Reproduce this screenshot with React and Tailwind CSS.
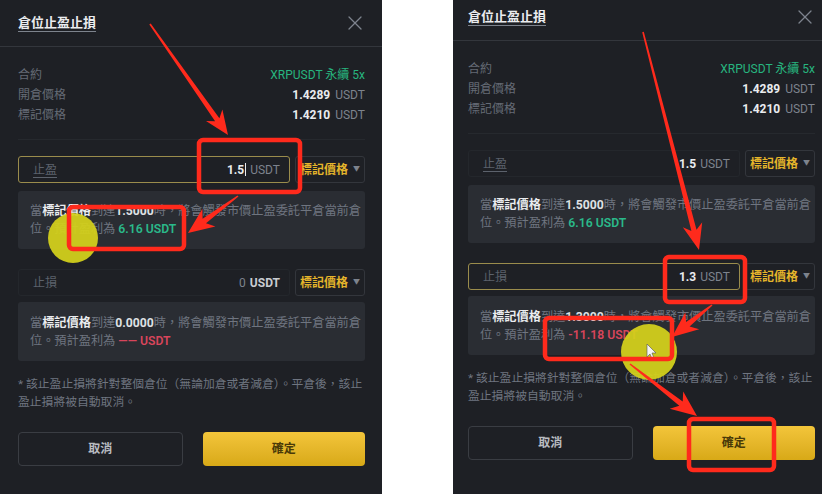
import { X } from "lucide-react";

const font = "font-['Roboto','Noto_Sans_CJK_TC',sans-serif]";

function arrowPoints(x1, y1, x2, y2, head = 22, headW = 10, shaft = 2.6, tail = 0.8) {
  const dx = x2 - x1;
  const dy = y2 - y1;
  const len = Math.hypot(dx, dy);
  const ux = dx / len;
  const uy = dy / len;
  const nx = -uy;
  const ny = ux;
  const bx = x2 - ux * head;
  const by = y2 - uy * head;
  const jx = x2 - ux * head * 0.78;
  const jy = y2 - uy * head * 0.78;
  const p = (x, y) => `${x.toFixed(1)},${y.toFixed(1)}`;
  return [
    p(x1 + nx * tail, y1 + ny * tail),
    p(jx + nx * shaft, jy + ny * shaft),
    p(bx + nx * headW, by + ny * headW),
    p(x2, y2),
    p(bx - nx * headW, by - ny * headW),
    p(jx - nx * shaft, jy - ny * shaft),
    p(x1 - nx * tail, y1 - ny * tail),
  ].join(" ");
}

function Row({ label, children }) {
  return (
    <div className="flex h-5 items-center justify-between text-[12px]">
      <span className="text-[#656b75]">{label}</span>
      <span>{children}</span>
    </div>
  );
}

function PriceInput({ label, value, focused, underline, caret, placeholder }) {
  return (
    <div className="flex h-[27px] gap-[5px]">
      <div
        className={`flex flex-1 items-center justify-between rounded-[3px] border pl-[14px] pr-[9px] ${
          focused ? "border-[#9a8c4c]" : "border-[#24272c]"
        }`}
      >
        <span
          className={`text-[12px] text-[#5c626c] ${
            underline ? "underline decoration-[#5c626c] underline-offset-[3px]" : ""
          }`}
        >
          {label}
        </span>
        <span className="flex items-center text-[12px]">
          {placeholder ? (
            <>
              <span className="text-[#7d838d]">{value}</span>
              <span className="ml-1 font-bold text-[#c9ccd1]">USDT</span>
            </>
          ) : (
            <>
              <span className="font-bold text-[#eaecef]">{value}</span>
              {caret && <span className="ml-px inline-block h-[13px] w-px bg-[#eaecef]" />}
              <span className="ml-1 text-[#7d838d]">USDT</span>
            </>
          )}
        </span>
      </div>
      <div className="flex w-[70px] items-center justify-center gap-[5px] rounded-[3px] border border-[#33363c]">
        <span className="text-[12px] font-bold text-[#e5b52b]">標記價格</span>
        <span className="text-[7px] text-[#7d838d]">▼</span>
      </div>
    </div>
  );
}

function InfoBox({ price, result, tone, className }) {
  const color = tone === "green" ? "text-[#2ab98a]" : "text-[#d8455b]";
  return (
    <div className={`rounded-[3px] bg-[#2a2d33] px-3 text-[12.2px] leading-[18px] text-[#6f7580] ${className}`}>
      <div className="whitespace-nowrap">
        當<span className="font-bold text-[#eaecef]">標記價格</span>到達
        <span className="font-bold text-[#dfe1e4]">{price}</span>時，將會觸發市價止盈委託平倉當前倉
      </div>
      <div className="whitespace-nowrap">
        位。預計盈利為 <span className={`font-semibold ${color}`}>{result}</span>
      </div>
    </div>
  );
}

function Panel({ side }) {
  const left = side === "left";
  const pad = left ? "pl-[18px] pr-[17px]" : "pl-[15px] pr-[7px]";
  return (
    <div className={`flex flex-col ${left ? "" : "-mt-[6px]"}`}>
      <div className={`flex h-[47px] items-center justify-between border-b border-[#33363c] ${pad}`}>
        <span className="text-[13px] font-bold text-[#eaecef] underline decoration-[#7d838d] underline-offset-[4px]">
          倉位止盈止損
        </span>
        <X size={24} strokeWidth={1.3} className="-mr-[2px] text-[#7d838d]" />
      </div>
      <div className={`flex flex-col ${pad}`}>
        <div className="border-b border-[#26292e] pt-[18px] pb-[14px]">
          <Row label="合約">
            <span className="text-[#27b57f]">XRPUSDT 永續 5x</span>
          </Row>
          <Row label="開倉價格">
            <span className="font-bold text-[#eaecef]">1.4289</span>
            <span className="ml-[5px] text-[#7d838d]">USDT</span>
          </Row>
          <Row label="標記價格">
            <span className="font-bold text-[#eaecef]">1.4210</span>
            <span className="ml-[5px] text-[#7d838d]">USDT</span>
          </Row>
        </div>
        <div className="mt-4">
          <PriceInput label="止盈" value="1.5" focused={left} caret={left} underline />
        </div>
        <InfoBox price="1.5000" result="6.16 USDT" tone="green" className="mt-2 py-[11px]" />
        <div className="mt-5">
          {left ? (
            <PriceInput label="止損" value="0" placeholder />
          ) : (
            <PriceInput label="止損" value="1.3" focused />
          )}
        </div>
        {left ? (
          <InfoBox price="0.0000" result="—— USDT" tone="red" className="mt-[6px] pt-[12px] pb-[11px]" />
        ) : (
          <InfoBox price="1.3000" result="-11.18 USDT" tone="red" className="mt-[6px] pt-[12px] pb-[11px]" />
        )}
        <div className="mt-[14px] text-[11.8px] leading-[18px] text-[#6f7580]">
          <div className="whitespace-nowrap">* 該止盈止損將針對整個倉位（無論加倉或者減倉）。平倉後，該止</div>
          <div className="whitespace-nowrap">盈止損將被自動取消。</div>
        </div>
        <div className="mt-[21px] flex h-[34px] gap-5">
          <button className="flex-1 rounded-[4px] border border-[#3a3d43] text-[12px] font-bold text-[#b9bcc1]">
            取消
          </button>
          <button className="flex-1 rounded-[4px] bg-gradient-to-b from-[#f3c53a] to-[#d8a916] text-[12px] font-bold text-[#4a3a08]">
            確定
          </button>
        </div>
      </div>
    </div>
  );
}

function Annotations() {
  const red = "#ff2a1c";
  const box = (x, y, w, h) => (
    <rect x={x + 2} y={y + 2} width={w - 4} height={h - 4} rx="4" fill="none" stroke={red} strokeWidth="4.5" />
  );
  return (
    <svg className="pointer-events-none absolute left-0 top-0" width="822" height="494" viewBox="0 0 822 494">
      <circle cx="73" cy="238" r="25" fill="#d3d01c" fillOpacity="0.94" />
      <circle cx="649" cy="352" r="28" fill="#d3d01c" fillOpacity="0.94" />
      <path d="M647 344 L647 357 L650 354 L652 359 L654 358 L652 353 L656 353 Z" fill="#f4f4f4" stroke="#555" strokeWidth="0.6" />

      <polygon points={arrowPoints(150, 24, 228, 135, 24, 10, 2.6)} fill={red} />
      <polygon points={arrowPoints(238, 196, 188, 233, 26, 11, 2.8)} fill={red} />
      {box(197, 138, 105, 56)}
      {box(67, 205, 119, 46)}

      <polygon points={arrowPoints(643, 32, 699, 250, 26, 10, 2.6)} fill={red} />
      <polygon points={arrowPoints(712, 305, 672, 337, 26, 11, 2.8)} fill={red} />
      <polygon points={arrowPoints(630, 364, 697, 416, 26, 11, 2.8)} fill={red} />
      {box(663, 255, 84, 49)}
      {box(543, 316, 131, 45)}
      {box(687, 417, 89, 55)}
    </svg>
  );
}

export default function App() {
  return (
    <div className={`relative flex h-[494px] w-[822px] overflow-hidden bg-white ${font}`}>
      <div className="h-full w-[382px] bg-[#1e2025]">
        <Panel side="left" />
      </div>
      <div className="w-[71px]" />
      <div className="h-full w-[369px] overflow-hidden bg-[#1e2025]">
        <Panel side="right" />
      </div>
      <Annotations />
    </div>
  );
}
